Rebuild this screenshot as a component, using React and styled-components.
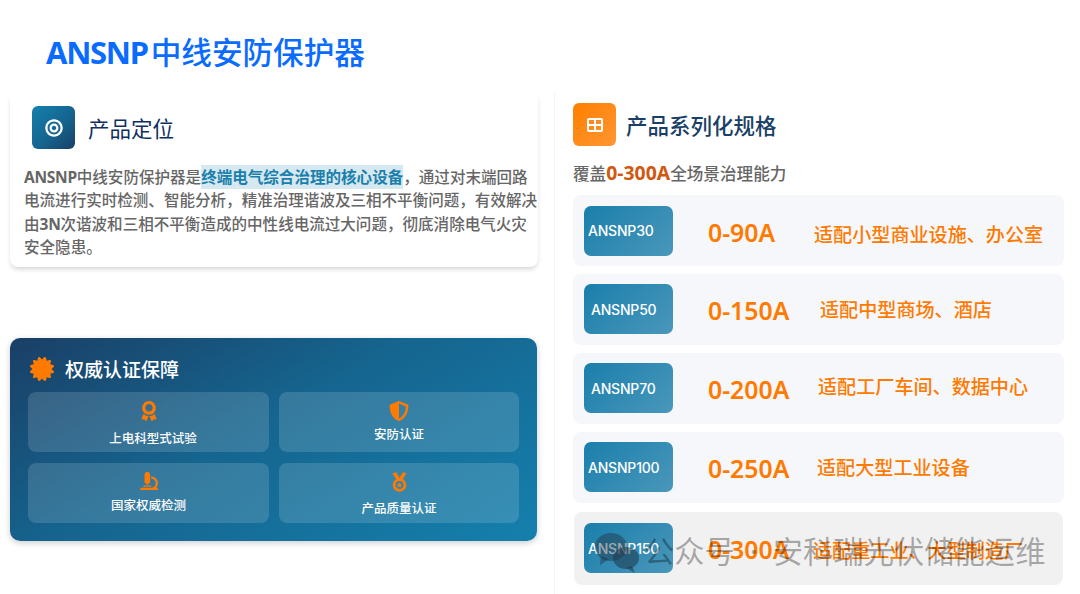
import React from 'react';
import styled, { createGlobalStyle } from 'styled-components';
import {
  FaBullseye,
  FaCertificate,
  FaAward,
  FaShieldAlt,
  FaMicroscope,
} from 'react-icons/fa';
import { FaTableCellsLarge } from 'react-icons/fa6';

const GlobalStyle = createGlobalStyle`
  html, body {
    margin: 0;
    background: #fff;
  }
  body {
    font-family: "Noto Sans", "Noto Sans CJK SC", sans-serif;
  }
`;

const Page = styled.div`
  position: relative;
  width: 1080px;
  height: 594px;
  overflow: hidden;
  background: #fff;
`;

const Header = styled.header`
  height: 92px;
  padding: 31px 0 0 46px;
  box-sizing: border-box;
`;

const Title = styled.h1`
  margin: 0;
  font-size: 30.6px;
  line-height: 42px;
  font-weight: 500;
  color: #0a6cff;
  white-space: nowrap;

  b {
    font-weight: 700;
    letter-spacing: -1.3px;
    margin-right: 3px;
    font-size: 31px;
  }
`;

const Main = styled.main`
  display: flex;
  height: 502px;
`;

const LeftColumn = styled.section`
  width: 528px;
  margin-left: 10px;
  display: flex;
  flex-direction: column;
`;

const RightColumn = styled.section`
  margin-left: 16px;
  width: 510px;
  padding: 11px 0 0 18px;
  box-sizing: border-box;
  border-left: 1px solid #f3f4f6;
`;

const Card = styled.div`
  height: 175px;
  background: #fff;
  border-radius: 8px;
  box-shadow: 0 3px 5px -1px rgba(0, 0, 0, 0.18);
  padding: 14px 0 0 14px;
  box-sizing: border-box;
`;

const SectionHead = styled.div`
  display: flex;
  align-items: center;
  gap: ${(p) => p.$gap}px;
  margin-left: ${(p) => p.$indent || 0}px;
`;

const IconBox = styled.div`
  width: 43px;
  height: 43px;
  border-radius: 6px;
  display: flex;
  align-items: center;
  justify-content: center;
  color: #fff;
  font-size: ${(p) => p.$icon}px;
  background: ${(p) => p.$bg};
`;

const SectionTitle = styled.h2`
  margin: 0;
  font-size: ${(p) => p.$size}px;
  font-weight: ${(p) => p.$weight};
  color: ${(p) => p.$color};
  white-space: nowrap;
`;

const Paragraph = styled.p`
  margin: 17px -1px 0 0;
  font-size: 15.55px;
  line-height: 23.3px;
  font-weight: 500;
  color: #666;

  b {
    font-weight: 700;
    letter-spacing: -0.3px;
  }
`;

const Highlight = styled.span`
  color: #1a80ab;
  font-weight: 700;
  background: rgba(26, 128, 171, 0.18);
  padding: 1px 0;
`;

const CertCard = styled.div`
  margin-top: 71px;
  width: 527px;
  height: 203px;
  border-radius: 10px;
  background: linear-gradient(150deg, #1a3f66 0%, #15658f 45%, #1580ad 100%);
  box-shadow: 0 2px 6px rgba(0, 0, 0, 0.2);
  padding: 17px 18px 0 18px;
  box-sizing: border-box;
`;

const CertIcon = styled.span`
  display: flex;
  color: #ff7a00;
  font-size: 24px;
  margin-left: 2px;
`;

const CertGrid = styled.div`
  display: grid;
  grid-template-columns: 241px 240px;
  grid-auto-rows: 60px;
  column-gap: 10px;
  row-gap: 11px;
  margin-top: 9px;
`;

const CertItem = styled.div`
  border-radius: 8px;
  background: rgba(255, 255, 255, 0.14);
  display: flex;
  flex-direction: column;
  align-items: center;
  padding-top: 9px;
  box-sizing: border-box;
  color: #ff7a00;
  font-size: 20px;

  svg {
    display: block;
  }
`;

const CertLabel = styled.div`
  margin-top: ${(p) => p.$top}px;
  margin-left: ${(p) => p.$left || 0}px;
  font-size: 12.5px;
  line-height: 18px;
  font-weight: 500;
  color: #fff;
  white-space: nowrap;
`;

const Subtitle = styled.div`
  margin-top: 16px;
  font-size: 16.6px;
  line-height: 24px;
  font-weight: 500;
  color: #666;
  white-space: nowrap;

  b {
    font-weight: 700;
    font-size: 19.4px;
    line-height: 20px;
    color: #d2570f;
  }
`;

const SpecList = styled.div`
  display: flex;
  flex-direction: column;
  gap: 7.9px;
  margin-top: 9px;
  width: 491px;
`;

const SpecRow = styled.div`
  display: flex;
  align-items: center;
  height: ${(p) => (p.$last ? 73 : 71)}px;
  margin: ${(p) => (p.$last ? '1px 1px 0' : '0')};
  padding-left: ${(p) => (p.$last ? 10 : 11)}px;
  box-sizing: border-box;
  border-radius: 8px;
  background: ${(p) => (p.$last ? '#f1f1f1' : '#f5f7fb')};
`;

const Badge = styled.div`
  width: 89px;
  height: 50px;
  flex: none;
  border-radius: 7px;
  display: flex;
  align-items: center;
  padding-left: ${(p) => p.$pad}px;
  box-sizing: border-box;
  background: linear-gradient(135deg, #1a7fab 0%, #4a97bb 100%);
  color: #fff;
  font-family: Inter, "Liberation Sans", sans-serif;
  font-weight: 500;
  font-size: 14px;
  letter-spacing: -0.2px;
  white-space: nowrap;
`;

const Range = styled.div`
  width: ${(p) => p.$width}px;
  margin: 2px 0 0 35px;
  flex: none;
  font-size: 24.8px;
  font-weight: 600;
  color: #ff7a00;
  white-space: nowrap;
`;

const Usage = styled.div`
  margin-top: ${(p) => p.$shift}px;
  font-size: 19.1px;
  font-weight: 500;
  color: #ff7a00;
  white-space: nowrap;
`;

const Watermark = styled.div`
  position: absolute;
  left: 593px;
  top: 530px;
  display: flex;
  align-items: center;
  gap: 2px;
  pointer-events: none;
  font-size: 30.3px;
  line-height: 44px;
  word-spacing: 7px;
  color: rgba(0, 0, 0, 0.32);
  white-space: nowrap;
`;

const WeChatMark = () => (
  <svg width="49" height="44" viewBox="0 0 49 44">
    <ellipse cx="18" cy="17" rx="16" ry="14" fill="rgba(30,45,60,0.42)" />
    <path d="M8 26 L7 35 L16 29 Z" fill="rgba(30,45,60,0.42)" />
    <ellipse cx="33" cy="28" rx="13" ry="11" fill="rgba(30,55,75,0.55)" />
    <path d="M39 36 L42 43 L33 38 Z" fill="rgba(30,55,75,0.55)" />
  </svg>
);

const MedalIcon = () => (
  <svg width="15" height="20" viewBox="0 0 15 20" fill="currentColor">
    <path d="M0.5 1.5 L4 0 L8.6 7.6 L5.4 9 Z" />
    <path d="M14.5 1.5 L11 0 L6.4 7.6 L9.6 9 Z" />
    <circle cx="7.5" cy="13" r="5.4" fill="none" stroke="currentColor" strokeWidth="2.8" />
    <path d="M7.5 10.2 L8.3 12.2 L10.4 12.3 L8.8 13.6 L9.3 15.6 L7.5 14.5 L5.7 15.6 L6.2 13.6 L4.6 12.3 L6.7 12.2 Z" />
  </svg>
);

const certs = [
  { icon: <FaAward />, label: '上电科型式试验', top: 9, left: 9 },
  { icon: <FaShieldAlt />, label: '安防认证', top: 5 },
  { icon: <FaMicroscope size={18} />, label: '国家权威检测', top: 7 },
  { icon: <MedalIcon />, label: '产品质量认证', top: 8 },
];

const specs = [
  { name: 'ANSNP30', pad: 4, range: '0-90A', usage: '适配小型商业设施、办公室', width: 106, shift: 6 },
  { name: 'ANSNP50', pad: 7, range: '0-150A', usage: '适配中型商场、酒店', width: 112, shift: 0 },
  { name: 'ANSNP70', pad: 7, range: '0-200A', usage: '适配工厂车间、数据中心', width: 110, shift: -4 },
  { name: 'ANSNP100', pad: 4, range: '0-250A', usage: '适配大型工业设备', width: 109, shift: 0 },
  { name: 'ANSNP150', pad: 4, range: '0-300A', usage: '适配重工业、大型制造厂', width: 105, shift: 4, last: true },
];

function App() {
  return (
    <Page>
      <GlobalStyle />
      <Header>
        <Title><b>ANSNP</b>中线安防保护器</Title>
      </Header>
      <Main>
        <LeftColumn>
          <Card>
            <SectionHead $gap={13} $indent={8}>
              <IconBox $icon={18} $bg="linear-gradient(135deg, #1580ad 0%, #15658f 55%, #1a3f66 100%)">
                <FaBullseye />
              </IconBox>
              <SectionTitle $size={21.5} $weight={400} $color="#0f2f5f">产品定位</SectionTitle>
            </SectionHead>
            <Paragraph>
              <b>ANSNP</b>中线安防保护器是<Highlight>终端电气综合治理的核心设备</Highlight>，通过对末端回路电流进行实时检测、智能分析，精准治理谐波及三相不平衡问题，有效解决由<b>3N</b>次谐波和三相不平衡造成的中性线电流过大问题，彻底消除电气火灾安全隐患。
            </Paragraph>
          </Card>
          <CertCard>
            <SectionHead $gap={11}>
              <CertIcon><FaCertificate /></CertIcon>
              <SectionTitle $size={19} $weight={500} $color="#fff">权威认证保障</SectionTitle>
            </SectionHead>
            <CertGrid>
              {certs.map((c) => (
                <CertItem key={c.label}>
                  {c.icon}
                  <CertLabel $top={c.top} $left={c.left}>{c.label}</CertLabel>
                </CertItem>
              ))}
            </CertGrid>
          </CertCard>
        </LeftColumn>
        <RightColumn>
          <SectionHead $gap={10}>
            <IconBox $icon={16} $bg="linear-gradient(135deg, #ff7f00 0%, #ff9633 100%)">
              <FaTableCellsLarge />
            </IconBox>
            <SectionTitle $size={21.5} $weight={500} $color="#1a3f66">产品系列化规格</SectionTitle>
          </SectionHead>
          <Subtitle>覆盖<b>0-300A</b>全场景治理能力</Subtitle>
          <SpecList>
            {specs.map((s) => (
              <SpecRow key={s.name} $last={s.last}>
                <Badge $pad={s.pad}>{s.name}</Badge>
                <Range $width={s.width}>{s.range}</Range>
                <Usage $shift={s.shift}>{s.usage}</Usage>
              </SpecRow>
            ))}
          </SpecList>
        </RightColumn>
      </Main>
      <Watermark>
        <WeChatMark />
        公众号 · 安科瑞光伏储能运维
      </Watermark>
    </Page>
  );
}

export default App;
